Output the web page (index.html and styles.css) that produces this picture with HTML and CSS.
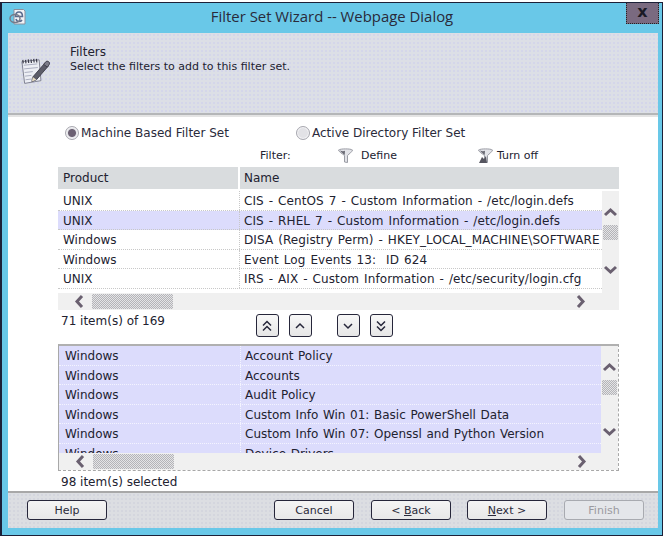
FILE: index.html
```html
<!DOCTYPE html>
<html lang="en">
<head>
  <meta charset="UTF-8">
  <title>Filter Set Wizard -- Webpage Dialog</title>
  <link rel="stylesheet" href="styles.css">
</head>
<body>
<div class="window">
  <div class="titlebar">
    <svg class="ie-icon" width="18" height="18" viewBox="0 0 18 18">
      <path d="M5 1.5h9.5l1.5 1.5v13h-11z" fill="#f2f3f6" stroke="#8d8f9c"/>
      <path d="M13.5 8.5h-7c0-3 1.500-4.500 3.500-4.500s3.500 1.500 3.500 4.500zM7 11c.5 2 1.500 2.500 3 2.500s2.300-.5 3-1.500" fill="none" stroke="#5b6c8f" stroke-width="1.600"/>
      <ellipse cx="6" cy="10.500" rx="5" ry="4" fill="none" stroke="#777a88" stroke-width="1.500"/>
    </svg>
    <div class="title">Filter Set Wizard -- Webpage Dialog</div>
    <div class="close">x</div>
  </div>

  <div class="dialog">
    <div class="header">
      <svg class="note-icon" width="29" height="31" viewBox="0 0 32 34">
        <path d="M1 5l19-2 2 23-18 3z" fill="#eceef4" stroke="#77798a"/>
        <path d="M3 9l15-1.500M3.500 13l15-1.500M4 17l9-1M4.500 21l7-.8M5 25l8-1" stroke="#a5a8bb"/>
        <path d="M2 3l.5 4M5 3l.5 4M8 2.500l.5 4M11 2.500l.5 4M14 2l.5 4M17 2l.5 4" stroke="#3a3a48" stroke-width="1.300"/>
        <path d="M13 22l13-15 4 3-13 15-5 2z" fill="#5c5c68" stroke="#3d3d4a"/>
        <path d="M25 8l2-2.500a2.500 2.500 0 0 1 4 3l-2 2.500z" fill="#7c7c88" stroke="#3d3d4a"/>
        <path d="M12 27l1-5 4 3z" fill="#e6dcc4"/>
      </svg>
      <div class="header-text">
        <div class="header-title">Filters</div>
        <div>Select the filters to add to this filter set.</div>
      </div>
    </div>

    <div class="content">
      <div class="radios">
        <label class="radio-item"><span class="radio checked"></span>Machine Based Filter Set</label>
        <label class="radio-item second"><span class="radio"></span>Active Directory Filter Set</label>
      </div>

      <div class="filter-row">
        <span class="filter-label">Filter:</span>
        <span class="filter-item define">
          <svg width="15" height="15" viewBox="0 0 15 15"><path d="M.5 2c2-1.500 12-1.500 14 0-.5 2-3 3.500-5 5.500v7l-3-.5v-6.500C4 5.500 1 4 .5 2z" fill="#e2e3e8" stroke="#9a9ca4"/><path d="M2 2.500c2 1 4 .8 5 .3l-.3 4.200C5 5.500 3 4 2 2.500z" fill="#6a6a74"/></svg>
          Define
        </span>
        <span class="filter-item turnoff">
          <svg width="15" height="15" viewBox="0 0 15 15"><path d="M.5 2c2-1.500 12-1.500 14 0-.5 2-3 3.500-5 5.500v7l-3-.5v-6.500C4 5.500 1 4 .5 2z" fill="#e2e3e8" stroke="#9a9ca4"/><path d="M2 2.500c2 1 4 .8 5 .3l-.3 4.200C5 5.500 3 4 2 2.500z" fill="#6a6a74"/><path d="M1 15l3-6 2 2 2-3 1 7z" fill="#55555f"/></svg>
          Turn off
        </span>
      </div>

      <div class="list-head">
        <div class="col-product">Product</div>
        <div class="col-name">Name</div>
      </div>
      <div class="list list-top">
        <div class="rows">
          <div class="row"><div class="col-product">UNIX</div><div class="col-name">CIS - CentOS 7 - Custom Information - /etc/login.defs</div></div>
          <div class="row selected"><div class="col-product">UNIX</div><div class="col-name">CIS - RHEL 7 - Custom Information - /etc/login.defs</div></div>
          <div class="row"><div class="col-product">Windows</div><div class="col-name">DISA (Registry Perm) - HKEY_LOCAL_MACHINE\SOFTWARE</div></div>
          <div class="row"><div class="col-product">Windows</div><div class="col-name">Event Log Events 13:&nbsp; ID 624</div></div>
          <div class="row"><div class="col-product">UNIX</div><div class="col-name">IRS - AIX - Custom Information - /etc/security/login.cfg</div></div>
        </div>
        <div class="vscroll">
          <svg width="15" height="10" viewBox="0 0 15 10"><path d="M2 8l5.500-5 5.500 5" class="chev"/></svg>
          <div class="vthumb"></div>
          <svg class="vdown" width="15" height="10" viewBox="0 0 15 10"><path d="M2 2l5.500 5 5.500-5" class="chev"/></svg>
        </div>
        <div class="hscroll">
          <svg width="10" height="15" viewBox="0 0 10 15"><path d="M8 2l-5 5.500 5 5.500" class="chev"/></svg>
          <div class="hthumb"></div>
          <svg class="hright" width="10" height="15" viewBox="0 0 10 15"><path d="M2 2l5 5.500-5 5.500" class="chev"/></svg>
        </div>
      </div>

      <div class="pager-row">
        <div class="count">71 item(s) of 169</div>
        <div class="pager">
          <button class="move"><svg width="12" height="12" viewBox="0 0 12 12"><path d="M2 5.500l4-4 4 4M2 10.500l4-4 4 4" class="arrow"/></svg></button>
          <button class="move"><svg width="12" height="12" viewBox="0 0 12 12"><path d="M2 8l4-4 4 4" class="arrow"/></svg></button>
          <button class="move gap"><svg width="12" height="12" viewBox="0 0 12 12"><path d="M2 4l4 4 4-4" class="arrow"/></svg></button>
          <button class="move"><svg width="12" height="12" viewBox="0 0 12 12"><path d="M2 1.500l4 4 4-4M2 6.500l4 4 4-4" class="arrow"/></svg></button>
        </div>
      </div>

      <div class="list list-bottom">
        <div class="rows">
          <div class="row selected"><div class="col-product">Windows</div><div class="col-name">Account Policy</div></div>
          <div class="row selected"><div class="col-product">Windows</div><div class="col-name">Accounts</div></div>
          <div class="row selected"><div class="col-product">Windows</div><div class="col-name">Audit Policy</div></div>
          <div class="row selected"><div class="col-product">Windows</div><div class="col-name">Custom Info Win 01: Basic PowerShell Data</div></div>
          <div class="row selected"><div class="col-product">Windows</div><div class="col-name">Custom Info Win 07: Openssl and Python Version</div></div>
          <div class="row selected"><div class="col-product">Windows</div><div class="col-name">Device Drivers</div></div>
        </div>
        <div class="vscroll">
          <svg width="15" height="10" viewBox="0 0 15 10"><path d="M2 8l5.500-5 5.500 5" class="chev"/></svg>
          <div class="vthumb"></div>
          <svg class="vdown" width="15" height="10" viewBox="0 0 15 10"><path d="M2 2l5.500 5 5.500-5" class="chev"/></svg>
        </div>
        <div class="hscroll">
          <svg width="10" height="15" viewBox="0 0 10 15"><path d="M8 2l-5 5.500 5 5.500" class="chev"/></svg>
          <div class="hthumb"></div>
          <svg class="hright" width="10" height="15" viewBox="0 0 10 15"><path d="M2 2l5 5.500-5 5.500" class="chev"/></svg>
        </div>
      </div>

      <div class="count">98 item(s) selected</div>
    </div>

    <div class="footer">
      <button class="btn">Help</button>
      <button class="btn cancel">Cancel</button>
      <button class="btn">&lt; <u>B</u>ack</button>
      <button class="btn next"><u>N</u>ext &gt;</button>
      <button class="btn disabled">Finish</button>
    </div>
  </div>
</div>
</body>
</html>
```

FILE: styles.css
```css
* {
  box-sizing: border-box;
}

html, body {
  margin: 0;
  padding: 0;
  background: #fff;
}

body {
  font-family: "DejaVu Sans", Verdana, sans-serif;
  font-size: 11px;
  color: #222230;
}

.window {
  width: 663px;
  height: 534px;
  margin-top: 2px;
  background: #69c8e8;
  border: 1px solid #1c2038;
  border-left-width: 2px;
  display: flex;
  flex-direction: column;
}

/* Title bar */
.titlebar {
  height: 30px;
  flex: none;
  display: grid;
  grid-template-columns: 40px 1fr 40px;
  align-items: start;
}

.ie-icon {
  margin: 5px 0 0 7px;
}

.title {
  font-family: "Open Sans", "Noto Sans", sans-serif;
  font-size: 14.9px;
  line-height: 27px;
  text-align: center;
  color: #2a2a3a;
}

.close {
  justify-self: end;
  width: 33px;
  height: 21px;
  margin-right: 3px;
  background: #7a6a80;
  border: 1px dotted #222;
  border-top: 0;
  color: #1a1a26;
  font-weight: bold;
  font-size: 16px;
  line-height: 18px;
  text-align: center;
}

/* Dialog body */
.dialog {
  flex: 1;
  margin: 0 4px 7px 6px;
  display: flex;
  flex-direction: column;
  background: #fff;
}

.header {
  height: 82px;
  flex: none;
  display: flex;
  background-color: #dcdfe6;
  background-image: radial-gradient(#d4d6ea 1px, transparent 1px);
  background-size: 4px 4px;
  border-bottom: 2px solid #b4b6b8;
  padding: 12px 0 0 13px;
  box-shadow: 0 2px 0 #e4e4e4;
}

.note-icon {
  margin: 12px 20px 0 0;
}

.header-text {
  line-height: 14px;
}

.header-title {
  font-size: 12px;
  line-height: 15px;
}

.content {
  flex: 1;
  padding: 8px 39px 0 50px;
  min-height: 0;
}

.radios {
  display: flex;
  height: 19px;
  padding-left: 7px;
  font-size: 12px;
}

.radio-item {
  display: flex;
  align-items: center;
  gap: 2px;
  width: 231px;
  color: #2a2a3a;
}

.radio {
  width: 14px;
  height: 14px;
  border-radius: 50%;
  border: 1px solid #a8a8b0;
  background: #e2e2e6;
  box-shadow: inset 0 0 0 1px #f4f4f6;
}

.radio.checked {
  background: radial-gradient(circle, #6b6072 0 3.5px, #e2e2e6 4.5px);
}

.filter-row {
  display: flex;
  align-items: center;
  height: 25px;
  padding: 1px 0 0 202px;
}

.filter-label {
  width: 78px;
}

.filter-item {
  display: flex;
  align-items: center;
  gap: 8px;
}

.define {
  width: 140px;
}

.turnoff {
  gap: 4px;
}

/* Lists */
.list-head {
  display: flex;
  height: 22px;
  background: #d9dcde;
  font-size: 12px;
  line-height: 23px;
}

.list-head .col-product {
  border-right: 2px solid #fff;
}

.col-product {
  width: 182px;
  flex: none;
  padding-left: 5px;
}

.col-name {
  padding-left: 4px;
  flex: none;
  white-space: nowrap;
}

.list {
  display: grid;
  grid-template-columns: 544px 17px;
}

.list-top {
  grid-template-rows: 102px 17px;
  margin-top: 2px;
}

.list-bottom {
  grid-template-rows: 107px 17px;
  grid-template-columns: 542px 17px;
  border: 1px dashed #a8a8a8;
  border-top: 2px solid #b0b0b0;
  border-left-style: solid;
}

.rows {
  overflow: hidden;
  font-size: 12px;
}

.row {
  display: flex;
  height: 19.5px;
  line-height: 21px;
  border-bottom: 1px dotted #c8c8c8;
  white-space: nowrap;
}

.row .col-name {
  word-spacing: 0.8px;
}

.list-top .row .col-name {
  word-spacing: 1px;
  letter-spacing: 0.1px;
}

.row .col-product {
  border-right: 1px dotted #c8c8c8;
}

.row.selected {
  background: #dcdcfc;
}

.list-bottom .row {
  border-bottom-color: #f4f4ff;
}

.list-bottom .row .col-product {
  border-right-color: #f4f4ff;
  padding-left: 6px;
}

.vscroll {
  background: #f0f0f0;
  display: flex;
  flex-direction: column;
  align-items: center;
  padding-top: 16px;
}

.vthumb {
  width: 15px;
  height: 15px;
  margin-top: 8px;
  background: repeating-conic-gradient(#b4b4b8 0 25%, #e4e4e6 0 50%) 0 0 / 2px 2px;
}

.vdown {
  margin-top: 25px;
}

.list-bottom .vdown {
  margin-top: 32px;
}

.hscroll {
  grid-column: 1 / 3;
  background: #f0f0f0;
  display: flex;
  align-items: center;
  padding-left: 16px;
}

.hthumb {
  width: 81px;
  height: 15px;
  margin-left: 8px;
  background: repeating-conic-gradient(#b4b4b8 0 25%, #e4e4e6 0 50%) 0 0 / 2px 2px;
}

.hright {
  margin-left: 403px;
}

.chev {
  fill: none;
  stroke: #6a6070;
  stroke-width: 3;
}

/* Move buttons */
.pager-row {
  display: flex;
  height: 34px;
}

.count {
  height: 20px;
  font-size: 12px;
  padding-left: 3px;
  line-height: 22px;
}

.pager {
  display: flex;
  gap: 10px;
  margin: 4px 0 0 91px;
}

.move {
  width: 23px;
  height: 23px;
  padding: 0;
  display: flex;
  align-items: center;
  justify-content: center;
  background: linear-gradient(#f8f8f8, #e6e6e6);
  border: 1px solid #26263a;
  border-radius: 3px;
}

.arrow {
  fill: none;
  stroke: #26263a;
  stroke-width: 1.500;
}

.move.gap {
  margin-left: 15px;
}

/* Footer buttons */
.footer {
  height: 37px;
  flex: none;
  display: flex;
  gap: 17px;
  padding: 7px 0 0 19px;
  background-color: #dcdee2;
  background-image: radial-gradient(#d4d6de 1px, transparent 1px);
  background-size: 4px 4px;
  border-top: 2px solid #a8a8a8;
}

.btn {
  width: 80px;
  height: 20px;
  padding: 0;
  font-family: inherit;
  font-size: 11px;
  color: #2a2a3a;
  background: linear-gradient(#f4f4f4, #e8e8e8);
  border: 1px solid #26263a;
  border-radius: 3px;
}

.btn.cancel {
  margin-left: 150px;
}

.btn.next {
  margin-left: -1px;
}

.btn.disabled {
  color: #9a9aa0;
  border-color: #a8aab0;
  background: #e4e6ea;
}
```
